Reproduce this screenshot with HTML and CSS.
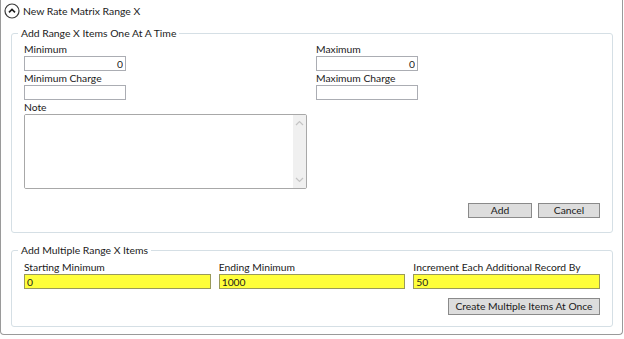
FILE: index.html
```html
<!DOCTYPE html>
<html>
<head>
<meta name="viewport" content="width=device-width, initial-scale=1">
<link rel="stylesheet" href="styles.css">
</head>
<body>

<div class="frame">

  <div class="head">
    <svg class="toggle" width="16" height="16" viewBox="0 0 16 16">
      <circle cx="8" cy="8" r="7" fill="none" stroke="#3a3a3a" stroke-width="1.2"/>
      <path d="M5 9.4 L8 6.4 L11 9.4" fill="none" stroke="#1e1e1e" stroke-width="1.6"/>
    </svg>
    <span>New Rate Matrix Range X</span>
  </div>

  <fieldset class="group single">
    <legend>Add Range X Items One At A Time</legend>

    <div class="pair">
      <div class="field">
        <label>Minimum</label>
        <input class="box num" type="text" value="0">
      </div>
      <div class="field">
        <label>Maximum</label>
        <input class="box num" type="text" value="0">
      </div>
      <div class="field">
        <label>Minimum Charge</label>
        <input class="box" type="text">
      </div>
      <div class="field">
        <label>Maximum Charge</label>
        <input class="box" type="text">
      </div>
    </div>

    <div class="field">
      <label>Note</label>
      <div class="note">
        <textarea></textarea>
        <div class="track">
          <svg width="9" height="6" viewBox="0 0 9 6"><path d="M1 5 L4.5 1.5 L8 5" fill="none" stroke="#c4c4c4" stroke-width="1.2"/></svg>
          <svg width="9" height="6" viewBox="0 0 9 6"><path d="M1 1 L4.5 4.5 L8 1" fill="none" stroke="#c4c4c4" stroke-width="1.2"/></svg>
        </div>
      </div>
    </div>

    <div class="actions">
      <button class="btn small">Add</button>
      <button class="btn small">Cancel</button>
    </div>
  </fieldset>

  <fieldset class="group multi">
    <legend>Add Multiple Range X Items</legend>

    <div class="triple">
      <div class="field">
        <label>Starting Minimum</label>
        <input class="box yellow" type="text" value="0">
      </div>
      <div class="field">
        <label>Ending Minimum</label>
        <input class="box yellow" type="text" value="1000">
      </div>
      <div class="field">
        <label>Increment Each Additional Record By</label>
        <input class="box yellow" type="text" value="50">
      </div>
    </div>

    <div class="actions">
      <button class="btn wide">Create Multiple Items At Once</button>
    </div>
  </fieldset>

</div>

</body>
</html>
```

FILE: styles.css
```css
body {
    margin: 0;
    background: #fff;
    font-family: Lato, "Noto Sans", sans-serif;
    font-size: 10.3px;
    color: #1a1a1a;
}

.frame {
    width: 621px;
    height: 334px;
    border: 1px solid #9a9a9a;
    border-top: none;
    border-radius: 0 0 4px 4px;
    box-sizing: content-box;
}

.head {
    display: flex;
    align-items: center;
    gap: 3px;
    height: 22px;
    padding-left: 3px;
    font-size: 10.4px;
}

.toggle {
    display: block;
}

.group {
    margin: 4px 9px 0 10px;
    padding: 1px 12px 14px 12px;
    border: 1px solid #d5dfe5;
    border-radius: 3px;
    min-width: 0;
}

.group legend {
    padding: 0 3px;
    margin-left: -6px;
    font-size: 10.4px;
    line-height: 14px;
}

.multi {
    margin-top: 10px;
    padding-bottom: 11px;
}

.field label {
    display: block;
    line-height: 14px;
    height: 14px;
    white-space: nowrap;
}

.pair {
    display: grid;
    grid-template-columns: 292px 1fr;
    padding-top: 1px;
}

.triple {
    display: grid;
    grid-template-columns: 1fr 1fr 1fr;
    column-gap: 8px;
    padding-top: 2px;
}

.box {
    display: block;
    box-sizing: border-box;
    width: 102px;
    height: 15px;
    margin: 0;
    padding: 0 2px;
    border: 1px solid #abadb3;
    font-family: inherit;
    font-size: 10.3px;
    color: #1a1a1a;
    background: #fff;
    outline: none;
}

.num {
    text-align: right;
}

.yellow {
    width: 100%;
    background: #ffff3a;
    border-color: #9a9a5a;
}

.note {
    display: flex;
    width: 283px;
    height: 75px;
    box-sizing: border-box;
    border: 1px solid #a8a8a8;
    border-radius: 2px;
    overflow: hidden;
}

.note textarea {
    flex: 1;
    border: none;
    resize: none;
    outline: none;
    margin: 0;
}

.track {
    width: 13px;
    background: #f0f0f0;
    display: flex;
    flex-direction: column;
    justify-content: space-between;
    align-items: center;
    padding: 5px 0;
}

.actions {
    display: flex;
    justify-content: flex-end;
    gap: 6px;
    margin-top: 14px;
}

.multi .actions {
    margin-top: 9px;
}

.btn {
    box-sizing: border-box;
    height: 15px;
    padding: 0;
    border: 1px solid #8a8a8a;
    background: #dddddd;
    font-family: inherit;
    font-size: 10.3px;
    line-height: 13px;
    color: #1a1a1a;
    white-space: nowrap;
}

.small {
    width: 64px;
}

.btn.small:last-child {
    width: 62px;
}

.wide {
    width: 152px;
    height: 17px;
}
```
